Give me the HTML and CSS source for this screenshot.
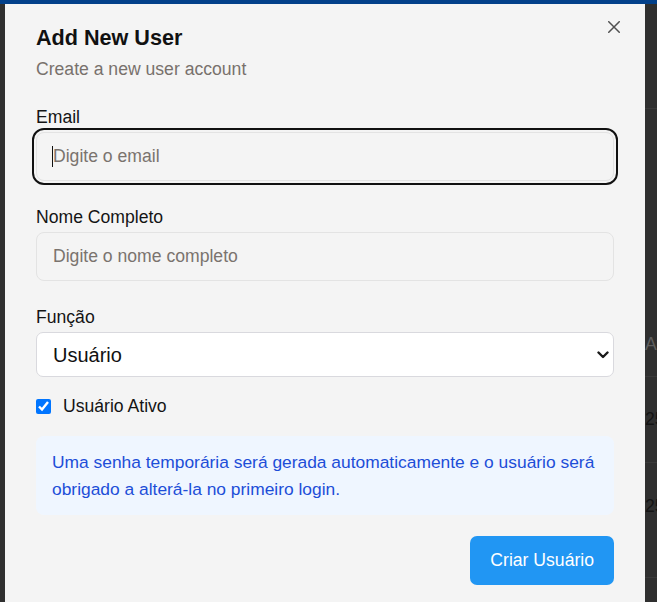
FILE: index.html
```html
<!DOCTYPE html>
<html lang="pt-BR">
<head>
<meta charset="utf-8">
<title>Add New User</title>
<link rel="stylesheet" href="styles.css">
</head>
<body>
<div class="page">
  <div class="topbar"></div>
  <div class="bg-table">
    <div class="bg-row bg-row-top"></div>
    <div class="bg-row bg-row-head"><span class="bg-head">Ativo</span></div>
    <div class="bg-row bg-row-1"><span class="bg-cell">25/03/2025</span></div>
    <div class="bg-row bg-row-2"><span class="bg-cell">25/03/2025</span></div>
    <div class="bg-row bg-row-3"></div>
  </div>
</div>

<div class="modal" role="dialog" aria-labelledby="modal-title">
  <button class="close" type="button" aria-label="Close">
    <svg width="12" height="12" viewBox="0 0 12 12" fill="none" stroke="#505050" stroke-width="1.5" stroke-linecap="square">
      <path d="M0.75 0.75L11.25 11.25M11.25 0.75L0.75 11.25"/>
    </svg>
  </button>
  <h2 class="title" id="modal-title">Add New User</h2>
  <p class="subtitle">Create a new user account</p>

  <form class="form">
    <div class="field">
      <label class="label" for="email">Email</label>
      <div class="input-wrap">
        <input class="input input-focused" id="email" type="email" placeholder="Digite o email">
        <span class="caret"></span>
      </div>
    </div>

    <div class="field">
      <label class="label" for="nome">Nome Completo</label>
      <input class="input" id="nome" type="text" placeholder="Digite o nome completo">
    </div>

    <div class="field">
      <label class="label" for="funcao">Função</label>
      <div class="select-wrap">
        <select class="select" id="funcao">
          <option>Usuário</option>
          <option>Administrador</option>
        </select>
        <svg class="chevron" width="12" height="8" viewBox="0 0 12 8" fill="none" stroke="#1a1a1a" stroke-width="2.4" stroke-linecap="round" stroke-linejoin="round">
          <path d="M1.5 1.5L6 6L10.5 1.5"/>
        </svg>
      </div>
    </div>

    <label class="check-row">
      <input class="checkbox" type="checkbox" checked>
      <span>Usuário Ativo</span>
    </label>

    <div class="info">Uma senha temporária será gerada automaticamente e o usuário será obrigado a alterá-la no primeiro login.</div>

    <div class="actions">
      <button class="btn-primary" type="button">Criar Usuário</button>
    </div>
  </form>
</div>
</body>
</html>
```

FILE: styles.css
```css
html, body {
  margin: 0;
  padding: 0;
  height: 100%;
  overflow: hidden;
}

body {
  background: #2f2f2f;
  font-family: "Liberation Sans", Arial, sans-serif;
  color: #111;
  position: relative;
}

/* background page (dimmed) */
.page {
  display: flex;
  flex-direction: column;
  height: 100%;
}

.topbar {
  height: 4px;
  background: #02408a;
  flex: none;
}

.bg-table {
  padding-left: 645px;
  font-size: 17.6px;
  line-height: 20px;
  white-space: nowrap;
}

.bg-row {
  box-sizing: border-box;
  border-bottom: 1px solid #3a3a3a;
}

.bg-row-top { height: 105px; }
.bg-row-head { height: 268px; padding-top: 225px; }
.bg-row-1 { height: 86px; padding-top: 32px; }
.bg-row-2 { height: 115px; padding-top: 33px; }
.bg-row-3 { height: 60px; border-bottom: none; }

.bg-head { color: #5e5e5e; }
.bg-cell { color: #141414; }

/* modal */
.modal {
  position: absolute;
  top: 4px;
  left: 5px;
  width: 640px;
  min-height: 640px;
  box-sizing: border-box;
  background: #f4f4f4;
  padding: 20px 31px;
}

.close {
  position: absolute;
  top: 17px;
  right: 25px;
  width: 12px;
  height: 12px;
  padding: 0;
  border: none;
  background: none;
  display: flex;
}

.title {
  margin: 0;
  font-size: 21.6px;
  line-height: 27px;
  font-weight: 700;
  color: #111;
}

.subtitle {
  margin: 6px 0 0;
  font-size: 17.6px;
  line-height: 24px;
  color: #78716c;
}

.form {
  margin-top: 26px;
  display: flex;
  flex-direction: column;
}

.field {
  display: flex;
  flex-direction: column;
}

.field + .field {
  margin-top: 26px;
}

.label {
  font-size: 17.6px;
  line-height: 20px;
  margin-bottom: 5px;
  color: #141414;
}

.input-wrap {
  position: relative;
  display: flex;
}

.input {
  box-sizing: border-box;
  width: 100%;
  height: 49px;
  padding: 0 16px;
  border: 1px solid #e3e3e3;
  border-radius: 8px;
  background: #f4f4f4;
  font-family: "Liberation Sans", Arial, sans-serif;
  font-size: 17.6px;
  color: #111;
  outline: none;
}

.input::placeholder {
  color: #7a736e;
}

.input-focused {
  outline: 2px solid #111;
  outline-offset: 2px;
}

.caret {
  position: absolute;
  left: 16px;
  top: 14px;
  width: 1px;
  height: 21px;
  background: #111;
}

.select-wrap {
  position: relative;
  display: flex;
}

.select {
  appearance: none;
  -webkit-appearance: none;
  box-sizing: border-box;
  width: 100%;
  height: 45px;
  padding: 0 30px 0 16px;
  border: 1px solid #d9d9de;
  border-radius: 7px;
  background: #fff;
  font-family: "Liberation Sans", Arial, sans-serif;
  font-size: 20px;
  color: #111;
  outline: none;
}

.chevron {
  position: absolute;
  right: 5px;
  top: 19px;
  pointer-events: none;
}

.check-row {
  margin-top: 16px;
  height: 26px;
  display: flex;
  align-items: center;
  gap: 12px;
  font-size: 17.6px;
  color: #141414;
}

.checkbox {
  width: 15px;
  height: 15px;
  margin: 0;
  accent-color: #0075ff;
}

.info {
  margin-top: 17px;
  padding: 13.2px 10px 13.2px 16px;
  border-radius: 8px;
  background: #eff6ff;
  color: #1d4ed8;
  font-size: 17.4px;
  line-height: 26.4px;
}

.actions {
  margin-top: 21px;
  display: flex;
  justify-content: flex-end;
}

.btn-primary {
  height: 49px;
  padding: 0 20px;
  border: none;
  border-radius: 7px;
  background: #2196f3;
  color: #fff;
  font-family: "Liberation Sans", Arial, sans-serif;
  font-size: 17.6px;
}
```
